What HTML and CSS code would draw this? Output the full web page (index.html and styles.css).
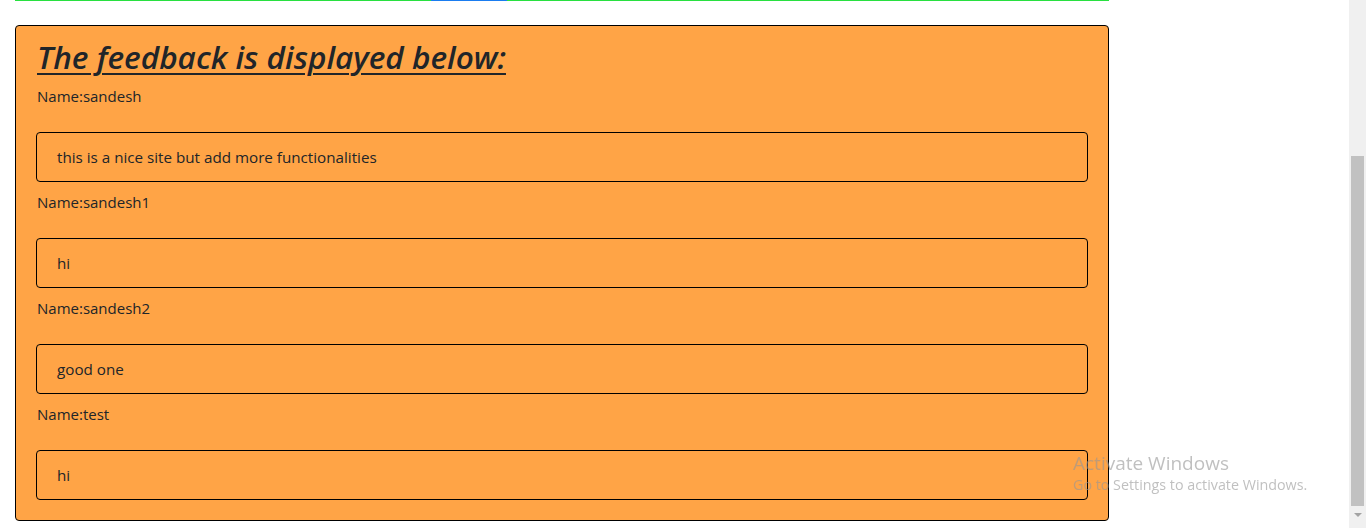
FILE: index.html
```html
<!DOCTYPE html>
<html lang="en">
<head>
<meta charset="utf-8">
<title>Feedback</title>
<link rel="stylesheet" href="styles.css">
</head>
<body>
<div class="page">
  <main class="main">
    <div class="progress">
      <div class="seg green" style="width:416px"></div>
      <div class="seg blue" style="width:76px"></div>
      <div class="seg green fill"></div>
    </div>
    <section class="card">
      <h2 class="title">The feedback is displayed below:</h2>
      <div class="entry">
        <p class="name">Name:sandesh</p>
        <div class="msg">this is a nice site but add more functionalities</div>
      </div>
      <div class="entry">
        <p class="name">Name:sandesh1</p>
        <div class="msg">hi</div>
      </div>
      <div class="entry">
        <p class="name">Name:sandesh2</p>
        <div class="msg">good one</div>
      </div>
      <div class="entry">
        <p class="name">Name:test</p>
        <div class="msg">hi</div>
      </div>
    </section>
  </main>
  <div class="scrollbar">
    <div class="track"><div class="thumb"></div></div>
    <div class="arrow"></div>
  </div>
</div>
<div class="watermark">
  <div class="wm-title">Activate Windows</div>
  <div class="wm-sub">Go to Settings to activate Windows.</div>
</div>
</body>
</html>
```

FILE: styles.css
```css
* { box-sizing: border-box; }
html, body {
  margin: 0;
  padding: 0;
  height: 528px;
  overflow: hidden;
  background: #ffffff;
  font-family: "Open Sans", "Noto Sans", sans-serif;
  color: #212529;
}
.page {
  display: flex;
  height: 528px;
}
.main {
  flex: 1;
  padding: 0 240px 0 15px;
}
.progress {
  display: flex;
  height: 1px;
  margin-bottom: 24px;
}
.seg { height: 1px; }
.green { background: #28e040; }
.blue { background: #1a7cf0; }
.fill { flex: 1; }
.card {
  background: #ffa446;
  border: 1px solid #000;
  border-radius: 4px;
  padding: 12px 20px 20px;
}
.title {
  margin: 0 0 8px;
  font-size: 31.5px;
  font-style: italic;
  font-weight: 600;
  text-decoration: underline;
  text-decoration-thickness: 2px;
  text-underline-offset: 4px;
  line-height: 38px;
  padding-left: 1px;
}
.entry { display: flex; flex-direction: column; }
.name {
  margin: 0 0 24px;
  font-size: 15px;
  line-height: 24px;
  padding-left: 1px;
}
.msg {
  height: 50px;
  border: 1px solid #000;
  border-radius: 4px;
  padding: 0 20px;
  display: flex;
  align-items: center;
  font-size: 15.2px;
  margin-bottom: 8px;
}
.entry:last-child .msg { margin-bottom: 0; }
.scrollbar {
  width: 17px;
  background: #f0f0f0;
  display: flex;
  flex-direction: column;
}
.track {
  flex: 1;
  padding: 156px 2px 0 2px;
}
.thumb {
  height: 350px;
  background: #c1c1c1;
}
.arrow {
  height: 22px;
  display: flex;
  justify-content: center;
  padding-top: 7px;
}
.arrow::before {
  content: "";
  width: 0;
  height: 0;
  border-left: 4px solid transparent;
  border-right: 4px solid transparent;
  border-top: 4px solid #a3a3a3;
}
.watermark {
  position: fixed;
  left: 1073px;
  top: 451px;
  color: rgba(150, 150, 150, 0.6);
  font-family: "Open Sans", sans-serif;
}
.wm-title { font-size: 19px; line-height: 24px; }
.wm-sub { font-size: 14.3px; line-height: 20px; margin-top: 0; }
```
